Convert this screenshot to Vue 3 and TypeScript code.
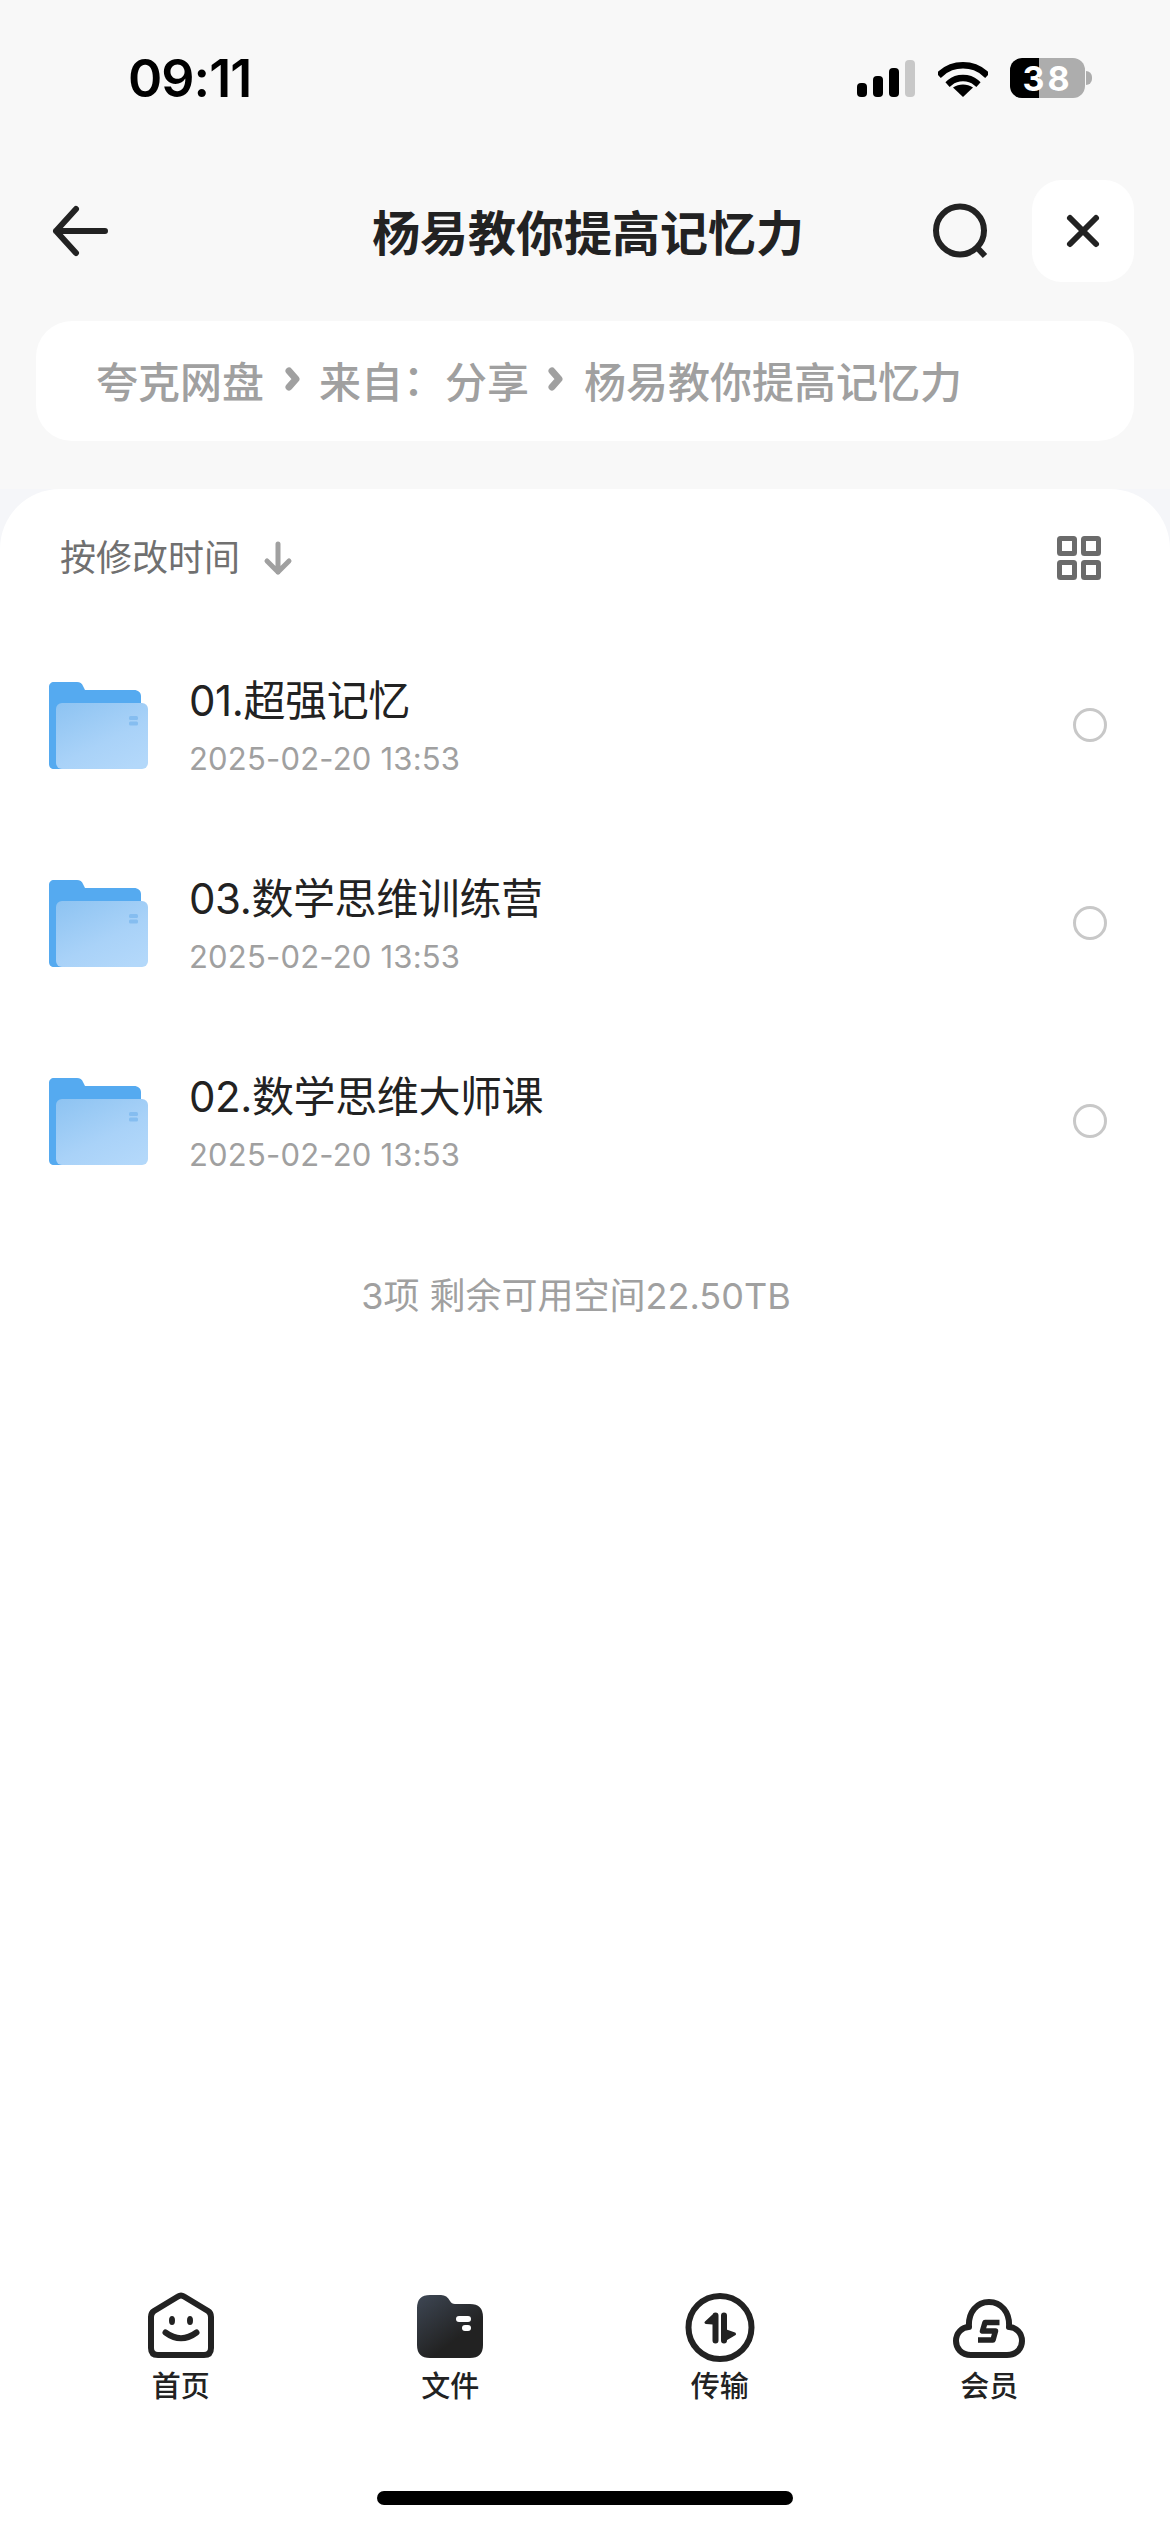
<script setup lang="ts">
const files = [
  { name: '01.超强记忆', time: '2025-02-20 13:53' },
  { name: '03.数学思维训练营', time: '2025-02-20 13:53' },
  { name: '02.数学思维大师课', time: '2025-02-20 13:53' },
]
</script>

<template>
  <div class="page">
    <!-- status bar -->
    <div class="status">
      <span class="clock">09:11</span>
      <div class="status-icons">
        <svg width="58" height="37" viewBox="0 0 58 37">
          <rect x="0" y="23" width="10" height="14" rx="4" fill="#000" />
          <rect x="16" y="16" width="10" height="21" rx="4" fill="#000" />
          <rect x="32" y="8" width="10" height="29" rx="4" fill="#000" />
          <rect x="48" y="0" width="10" height="37" rx="4" fill="#c8c8c8" />
        </svg>
        <svg class="wifi" width="50" height="37" viewBox="0 0 50 37">
          <path d="M3 13.5C15 2.500 35 2.500 47 13.500" fill="none" stroke="#000" stroke-width="6.500" stroke-linecap="square" />
          <path d="M12 22.500C19 16.500 31 16.500 38 22.500" fill="none" stroke="#000" stroke-width="6.500" stroke-linecap="square" />
          <path d="M25 37L15 27.500C21 23.500 29 23.500 35 27.500Z" fill="#000" />
        </svg>
        <div class="battery"><span>38</span></div>
        <div class="battery-nib"></div>
      </div>
    </div>

    <!-- nav -->
    <div class="nav">
      <div class="nav-left">
        <svg width="64" height="64" viewBox="0 0 64 64" fill="none" stroke="#222" stroke-width="6" stroke-linecap="round" stroke-linejoin="round">
          <path d="M8 32H57M28 10L8 32L28 54" />
        </svg>
      </div>
      <div class="title">杨易教你提高记忆力</div>
      <div class="nav-right">
        <svg width="64" height="64" viewBox="0 0 64 64" fill="none" stroke="#222" stroke-width="6" stroke-linecap="round">
          <circle cx="32" cy="31.500" r="24" />
          <path d="M50 49.500L57 57" stroke-linecap="butt" />
        </svg>
        <div class="close">
          <svg width="40" height="40" viewBox="0 0 40 40" fill="none" stroke="#222" stroke-width="6" stroke-linecap="round">
            <path d="M7 7L33 33M33 7L7 33" />
          </svg>
        </div>
      </div>
    </div>

    <!-- breadcrumb -->
    <div class="crumb">
      <span>夸克网盘</span>
      <svg class="chev" width="55" height="30" viewBox="0 0 55 30" fill="none" stroke="#a0a0a0" stroke-width="7" stroke-linecap="round" stroke-linejoin="round">
        <path d="M25 7L32 15L25 23" />
      </svg>
      <span>来自<span class="colon">：</span>分享</span>
      <svg class="chev" width="55" height="30" viewBox="0 0 55 30" fill="none" stroke="#a0a0a0" stroke-width="7" stroke-linecap="round" stroke-linejoin="round">
        <path d="M23 7L30 15L23 23" />
      </svg>
      <span>杨易教你提高记忆力</span>
    </div>

    <!-- sheet -->
    <div class="sheet-wrap">
      <div class="sheet">
        <div class="sort">
          <span class="sort-label">按修改时间</span>
          <svg width="32" height="36" viewBox="0 0 32 36" fill="none" stroke="#a0a0a0" stroke-width="5" stroke-linecap="round" stroke-linejoin="round">
            <path d="M16 4V32M5 21L16 32L27 21" />
          </svg>
          <svg class="grid-icon" width="44" height="44" viewBox="0 0 44 44" fill="none" stroke="#6b6b6b" stroke-width="5" stroke-linejoin="round">
            <rect x="2.500" y="2.500" width="15" height="15" rx="1" />
            <rect x="26.500" y="2.500" width="15" height="15" rx="1" />
            <rect x="2.500" y="26.500" width="15" height="15" rx="1" />
            <rect x="26.500" y="26.500" width="15" height="15" rx="1" />
          </svg>
        </div>

        <div v-for="(f, i) in files" :key="f.name" class="row">
          <svg class="folder" width="100" height="87" viewBox="0 0 100 87">
            <defs>
              <linearGradient :id="`front${i}`" x1="0.100" y1="0" x2="0.800" y2="1">
                <stop offset="0" stop-color="#8fc4f2" />
                <stop offset="0.600" stop-color="#a9d2f8" />
                <stop offset="1" stop-color="#b3d8fa" />
              </linearGradient>
            </defs>
            <path d="M5 0H28C31 0 33 1.500 34 4L36 8H85C89 8 92 10.500 92 14V82C92 85 89 87 86 87H5C2 87 0 85 0 82V5C0 2 2 0 5 0Z" fill="#55aaf0" />
            <rect x="7" y="21" width="92" height="66" rx="6" :fill="`url(#front${i})`" />
            <rect x="80" y="34" width="9" height="4" rx="1.500" fill="#85bdf0" />
            <rect x="80" y="39.500" width="9" height="4" rx="1.500" fill="#85bdf0" />
          </svg>
          <div class="info">
            <div class="name">{{ f.name }}</div>
            <div class="time">{{ f.time }}</div>
          </div>
          <div class="radio"></div>
        </div>

        <div class="summary">3项 剩余可用空间22.50TB</div>

        <!-- tab bar -->
        <div class="tabs">
          <div class="tab">
            <svg width="80" height="80" viewBox="0 0 80 80" fill="none" stroke="#222" stroke-width="6" stroke-linecap="round" stroke-linejoin="round">
              <path d="M37 10.500Q40 8.500 43 10.500L67 25Q70 27 70 31V62Q70 69 63 69H17Q10 69 10 62V31Q10 27 13 25Z" />
              <ellipse cx="31" cy="34.500" rx="3" ry="4.500" fill="#222" stroke="none" />
              <ellipse cx="49" cy="34.500" rx="3" ry="4.500" fill="#222" stroke="none" />
              <path d="M24.500 46.500Q40 58 55.500 46.500" />
            </svg>
            <span>首页</span>
          </div>
          <div class="tab">
            <svg width="80" height="80" viewBox="0 0 80 80">
              <defs>
                <linearGradient id="fileTab" x1="0.050" y1="0" x2="0.600" y2="0.700">
                  <stop offset="0" stop-color="#3d4653" />
                  <stop offset="1" stop-color="#222" />
                </linearGradient>
              </defs>
              <path d="M20 9H31Q37 9 40 15Q41.500 18 45 18H60Q73 18 73 31V59Q73 72 60 72H20Q7 72 7 59V22Q7 9 20 9Z" fill="url(#fileTab)" />
              <rect x="46" y="30" width="15" height="6" rx="3" fill="#fff" />
              <rect x="52" y="39" width="9" height="6" rx="3" fill="#fff" />
            </svg>
            <span>文件</span>
          </div>
          <div class="tab">
            <svg width="80" height="80" viewBox="0 0 80 80" fill="none" stroke="#222" stroke-width="6" stroke-linecap="round" stroke-linejoin="round">
              <circle cx="40" cy="41.500" r="31.500" />
              <path d="M35.500 29.500V54.500M44 29.500V54.500" />
              <path d="M33 30L26 36.500L33 37Z" fill="#222" stroke-width="3" />
              <path d="M46 53L54.500 48L46 45Z" fill="#222" stroke-width="3" />
            </svg>
            <span>传输</span>
          </div>
          <div class="tab">
            <svg width="80" height="80" viewBox="0 0 80 80" fill="none" stroke="#222" stroke-width="6" stroke-linejoin="round">
              <path d="M22 69C12 69 7 62 7 55C7 47 13 41 20 41C19 26 28 16 40 16C52 16 61 26 60 41C67 41 73 47 73 55C73 62 68 69 58 69Z" />
              <path d="M50.500 36.500H36L33.500 45H46.500L44 54H29" stroke-width="5.500" />
            </svg>
            <span>会员</span>
          </div>
        </div>

        <div class="home-bar"></div>
      </div>
    </div>
  </div>
</template>

<style scoped>
.page {
  width: 1170px;
  height: 2532px;
  display: flex;
  flex-direction: column;
  background: #f8f8f8;
  overflow: hidden;
  font-family: Inter, "Noto Sans CJK SC", sans-serif;
  color: #222;
}

.status {
  height: 156px;
  flex: none;
  display: flex;
  align-items: center;
  justify-content: space-between;
  padding: 0 78px 0 128px;
}

.clock {
  font-size: 52px;
  font-weight: 600;
  color: #000;
  letter-spacing: -1px;
}

.status-icons {
  display: flex;
  align-items: center;
}

.wifi {
  margin-left: 23px;
}

.battery {
  margin-left: 22px;
  width: 75px;
  height: 40px;
  border-radius: 12px;
  background: linear-gradient(90deg, #000 29px, #adadad 29px);
  display: flex;
  align-items: center;
  justify-content: center;
  color: #fff;
  font-size: 34px;
  font-weight: 700;
  letter-spacing: 3px;
}

.battery-nib {
  width: 6px;
  height: 14px;
  margin-left: 1px;
  background: #adadad;
  border-radius: 0 7px 7px 0;
}

.nav {
  flex: none;
  height: 102px;
  margin-top: 24px;
  padding: 0 36px;
  display: grid;
  grid-template-columns: 1fr auto 1fr;
  align-items: center;
}

.nav-left {
  display: flex;
  align-items: center;
  padding-left: 12px;
}

.title {
  font-size: 48px;
  font-weight: 700;
  color: #222;
  padding: 0 0 3px 6px;
}

.nav-right {
  display: flex;
  align-items: center;
  justify-content: flex-end;
  gap: 40px;
}

.close {
  width: 102px;
  height: 102px;
  border-radius: 30px;
  background: #fff;
  display: flex;
  align-items: center;
  justify-content: center;
}

.crumb {
  flex: none;
  height: 120px;
  box-sizing: border-box;
  margin: 39px 36px 0;
  padding: 0 0 4px 60px;
  border-radius: 36px;
  background: #fff;
  display: flex;
  align-items: center;
  font-size: 42px;
  font-weight: 500;
  color: #a0a0a0;
  white-space: nowrap;
}

/* half-width form of the colon, the rest of its cell stays as space */
.colon {
  font-family: "Noto Sans CJK TC", sans-serif;
  font-feature-settings: "halt";
  margin-right: 21px;
}

.chev {
  flex: none;
}

.sheet-wrap {
  flex: 1;
  margin-top: 48px;
  background: #f5f6f9;
  display: flex;
  flex-direction: column;
}

.sheet {
  flex: 1;
  background: #fff;
  border-radius: 60px 60px 0 0;
  display: flex;
  flex-direction: column;
}

.sort {
  flex: none;
  height: 137px;
  padding: 0 69px 0 60px;
  display: flex;
  align-items: center;
  gap: 22px;
}

.sort-label {
  font-size: 36px;
  color: #707070;
  padding-bottom: 6px;
}

.grid-icon {
  margin-left: auto;
}

.row {
  flex: none;
  height: 198px;
  padding: 0 63px 0 49px;
  display: flex;
  align-items: center;
  gap: 40px;
}

.folder {
  flex: none;
}

.info {
  flex: 1;
  min-width: 0;
  padding-top: 2px;
}

.name {
  font-size: 42px;
  letter-spacing: -0.400px;
  line-height: 56px;
  color: #222;
}

.time {
  margin-top: 9px;
  font-size: 31px;
  letter-spacing: 0.200px;
  line-height: 42px;
  color: #a0a0a0;
}

.radio {
  flex: none;
  width: 34px;
  height: 34px;
  box-sizing: border-box;
  border: 3px solid #c8c8c8;
  border-radius: 50%;
}

.summary {
  flex: none;
  margin-top: 53px;
  text-align: center;
  font-size: 36px;
  line-height: 46px;
  color: #a0a0a0;
  padding-right: 18px;
}

.tabs {
  flex: none;
  margin-top: auto;
  padding: 0 46px;
  display: grid;
  grid-template-columns: repeat(4, 1fr);
}

.tab {
  display: flex;
  flex-direction: column;
  align-items: center;
  gap: 3px;
  font-size: 29px;
  font-weight: 500;
  line-height: 36px;
  color: #222;
}

.home-bar {
  flex: none;
  width: 416px;
  height: 14px;
  margin: 86px auto 27px;
  border-radius: 7px;
  background: #000;
}
</style>

<style>
html, body {
  margin: 0;
  background: #fff;
}
</style>
